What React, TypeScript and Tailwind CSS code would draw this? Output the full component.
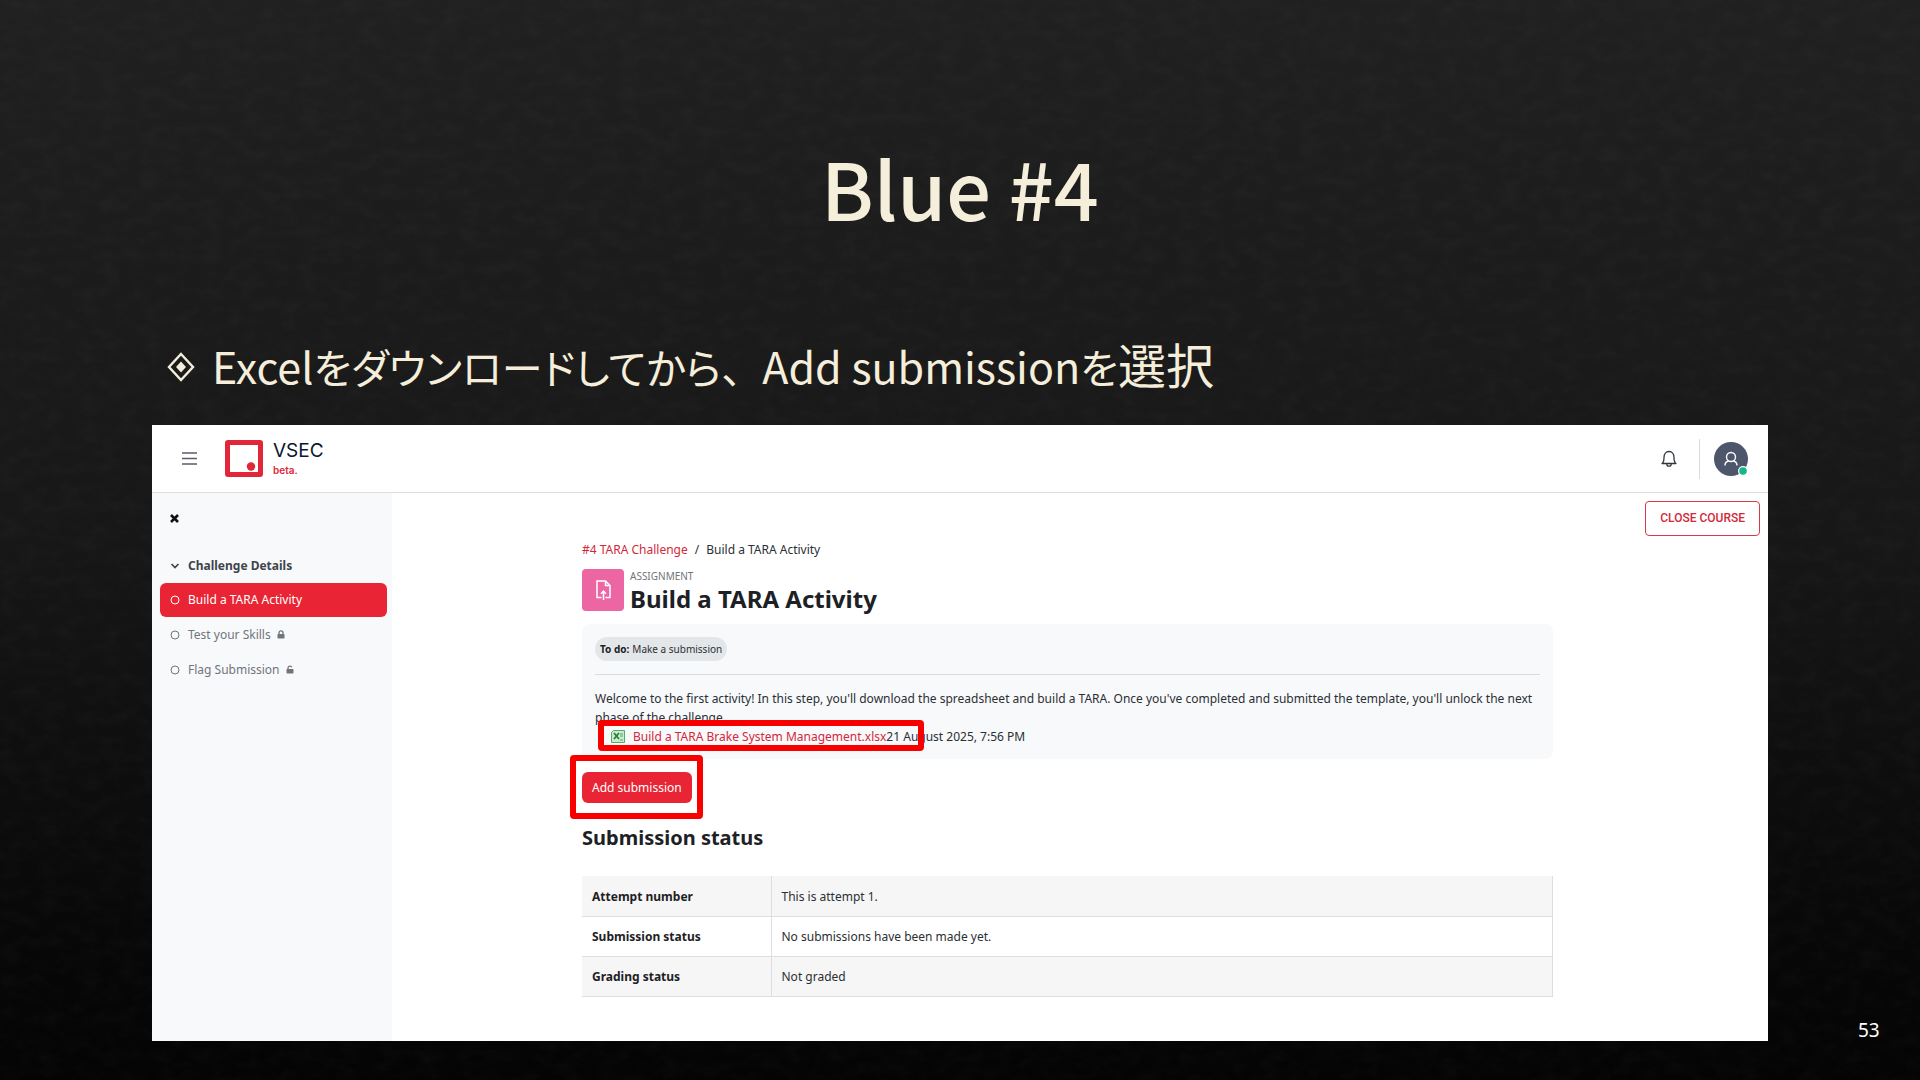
import React from "react";

const outline = "absolute rounded-sm border-6 border-[#f80000] pointer-events-none";

function Backdrop() {
  return (
    <svg className="absolute inset-0 h-full w-full" aria-hidden="true">
      <filter id="slate" x="0" y="0" width="100%" height="100%">
        <feTurbulence type="fractalNoise" baseFrequency="0.05 0.08" numOctaves="5" seed="8" />
        <feColorMatrix values="0 0 0 0 1  0 0 0 0 1  0 0 0 0 1  0.14 0 0 0 -0.05" />
      </filter>
      <rect width="100%" height="100%" filter="url(#slate)" opacity="0.3" />
    </svg>
  );
}

function Ring() {
  return (
    <svg width="10" height="10" viewBox="0 0 10 10" fill="none" stroke="currentColor" aria-hidden="true">
      <circle cx="5" cy="5" r="4" />
    </svg>
  );
}

function Lock({ open = false }: { open?: boolean }) {
  return (
    <svg width="8" height="9" viewBox="0 0 8 9" className="-ml-0.5" aria-hidden="true">
      <rect x="0.5" y="4" width="7" height="4.5" rx="0.7" fill="currentColor" />
      <path d={open ? "M2 4V2.8a2 2 0 0 1 3.8-.6" : "M2 4V2.8a2 2 0 0 1 4 0V4"} fill="none" stroke="currentColor" strokeWidth="1.3" />
    </svg>
  );
}

function TopBar() {
  return (
    <header className="flex h-17 items-center border-b border-[#dcdee0] pr-5 pl-7">
      <button aria-label="Menu" className="p-0.5">
        <svg width="15" height="13" viewBox="0 0 15 13" stroke="#5a5e66" strokeWidth="1.6" aria-hidden="true">
          <path d="M0 1h15M0 6.5h15M0 12h15" />
        </svg>
      </button>
      <a href="#home" className="ml-6.5 flex items-center gap-2.5">
        <svg width="38" height="37" viewBox="0 0 38 37" aria-hidden="true">
          <rect x="2.5" y="2.5" width="33" height="32" rx="0.5" fill="none" stroke="#e02638" strokeWidth="5" />
          <circle cx="26" cy="26.5" r="4.2" fill="#e02638" />
        </svg>
        <span className="flex flex-col pt-0.5">
          <span className="font-['Inter',sans-serif] text-[19px] leading-5 text-[#0b1630]">VSEC</span>
          <span className="font-['Inter',sans-serif] text-[10px] leading-[18px] font-semibold text-[#e02638]">beta.</span>
        </span>
      </a>
      <div className="ml-auto flex items-center">
        <button aria-label="Notifications">
          <svg width="16" height="18" viewBox="0 0 16 18" fill="none" stroke="#33373d" strokeWidth="1.3" strokeLinejoin="round" aria-hidden="true">
            <path d="M1 13.5c1.6-1 2-2.4 2-6C3 4 5 1.5 8 1.5s5 2.5 5 6c0 3.6.4 5 2 6z" />
            <path d="M5.8 14a2.2 2.2 0 0 0 4.4 0" />
          </svg>
        </button>
        <span className="ml-5.5 h-10 w-px bg-[#d9dbde]" />
        <button aria-label="Account" className="relative ml-3.5">
          <svg width="34" height="34" viewBox="0 0 34 34" fill="none" aria-hidden="true">
            <circle cx="17" cy="17" r="17" fill="#4d566b" />
            <circle cx="17" cy="15" r="4.5" stroke="#fff" strokeWidth="1.4" />
            <path d="M11 23.5c0-2.5 1.5-4 3.5-4.5M23 23.5c0-2.5-1.5-4-3.5-4.5" stroke="#fff" strokeWidth="1.4" />
            <circle cx="29" cy="29" r="5" fill="#fff" />
            <circle cx="29" cy="29" r="3.8" fill="#12b886" />
          </svg>
        </button>
      </div>
    </header>
  );
}

function Sidebar() {
  return (
    <nav className="w-60 shrink-0 bg-[#f8f9fb] pr-[5px] pl-2 text-[12px] text-[#6f757b]">
      <button aria-label="Close drawer" className="mt-[15px] block px-2.5 py-1.5 text-[#111]">
        <svg width="9" height="9" viewBox="0 0 9 9" stroke="currentColor" strokeWidth="2.6" aria-hidden="true">
          <path d="M1 1l7 7M8 1l-7 7" />
        </svg>
      </button>
      <button className="mt-5 flex h-[34px] w-full items-center gap-2 px-2.5 font-bold text-[#3f454b]">
        <svg width="10" height="6" viewBox="0 0 10 6" fill="none" stroke="currentColor" strokeWidth="1.7" aria-hidden="true">
          <path d="M1.5 1L5 4.5 8.5 1" />
        </svg>
        Challenge Details
      </button>
      <a href="#build" className="flex h-[34px] items-center gap-2 rounded-md bg-[#e92434] px-2.5 text-white">
        <Ring />
        Build a TARA Activity
      </a>
      <a href="#test" className="flex h-[35px] items-center gap-2 px-2.5">
        <Ring />
        Test your Skills
        <Lock />
      </a>
      <a href="#flag" className="flex h-[35px] items-center gap-2 px-2.5">
        <Ring />
        Flag Submission
        <Lock open />
      </a>
    </nav>
  );
}

const rows = [
  ["Attempt number", "This is attempt 1."],
  ["Submission status", "No submissions have been made yet."],
  ["Grading status", "Not graded"],
];

function Activity() {
  return (
    <main className="relative min-w-0 flex-1 pr-[215px] pb-11 pl-[190px] text-[12px] text-[#2b2f33]">
      <button className="absolute top-2 right-2 h-[35px] rounded-sm border border-[#d63a4a] px-3.5 pb-0.5 font-['Roboto',sans-serif] text-[12px] font-medium text-[#d3283a]">
        CLOSE COURSE
      </button>
      <div className="mt-[49px] flex h-4 items-center gap-[7px]">
        <a href="#tara" className="text-[#d3283a]">#4 TARA Challenge</a>
        <span>/</span>
        <span>Build a TARA Activity</span>
      </div>
      <div className="mt-[11px] flex items-start gap-1.5">
        <span className="flex size-[42px] items-center justify-center rounded-sm bg-[#ec66a3]">
          <svg width="15" height="20" viewBox="0 0 15 20" fill="none" stroke="#fff" strokeWidth="1.5" aria-hidden="true">
            <path d="M5.5 17.5H1V1h8.5L14 5.5v12H9.5M9.5 1v4.5H14M7.5 20v-8.500M5 13.800l2.500-2.600 2.500 2.600" />
          </svg>
        </span>
        <div>
          <div className="text-[10px] leading-[15px] text-[#6f757b]">ASSIGNMENT</div>
          <h2 className="text-[24px] leading-[30px] font-bold text-[#1d2125]">Build a TARA Activity</h2>
        </div>
      </div>
      <section className="mt-2.5 rounded-lg bg-[#f8f9fb] px-[13px] py-[13px]">
        <div className="flex">
          <span className="flex h-6 items-center gap-[3px] rounded-full bg-[#e4e7ea] px-[5px] text-[10px]">
            <strong className="text-[#1d2125]">To do:</strong> Make a submission
          </span>
        </div>
        <hr className="mt-[13px] border-[#d9dcdf]" />
        <p className="mt-3.5 leading-[19px]">
          Welcome to the first activity! In this step, you'll download the spreadsheet and build a TARA. Once you've completed and submitted the template, you'll unlock the next phase of the challenge.
        </p>
        <div className="relative flex h-[19px] items-center pl-4">
          <svg width="14" height="13" viewBox="0 0 14 13" aria-hidden="true">
            <path d="M2.5.5h11v12H.5v-10z" fill="#c9ecd0" stroke="#4fae63" />
            <path d="M3 3l5 6M8 3L3 9" stroke="#2c7d3d" strokeWidth="1.8" />
            <path d="M9 4h3M9 6h3M9 10h3" stroke="#4fae63" />
          </svg>
          <a href="#file" className="ml-2 text-[#d3283a]">Build a TARA Brake System Management.xlsx</a>
          <span>21 August 2025, 7:56 PM</span>
          <span className={outline + " -top-[7px] left-[3px] h-[31px] w-[326px]"} />
        </div>
      </section>
      <div className="relative mt-[13px] flex">
        <button className="h-[31px] rounded-md bg-[#e92434] px-2.5 text-white">Add submission</button>
        <span className={outline + " -top-[17px] -left-3 h-16 w-[133px]"} />
      </div>
      <h3 className="mt-[21px] text-[20px] leading-7 font-bold text-[#1d2125]">Submission status</h3>
      <table className="mt-6 w-full border-collapse text-left">
        <tbody>
          {rows.map(([label, value]) => (
            <tr key={label} className="h-10 border-r border-b border-[#dcdee0] odd:bg-[#f6f6f6]">
              <th scope="row" className="w-[189px] border-r border-[#dcdee0] px-2.5 pt-0.5 font-bold text-[#1d2125]">{label}</th>
              <td className="px-2.5 pt-0.5">{value}</td>
            </tr>
          ))}
        </tbody>
      </table>
    </main>
  );
}

export default function App() {
  return (
    <div className="relative flex min-h-screen flex-col bg-linear-to-b from-[#202020] via-[#171717] to-[#040404] font-['Noto_Sans',sans-serif]">
      <Backdrop />
      <div className="relative font-['Noto_Sans_CJK_JP',sans-serif] text-[#f5eeda]">
        <h1 className="pt-[129px] text-center text-[79px] leading-[116px] font-medium">Blue #4</h1>
        <ul className="mt-[86px] pl-[167px]">
          <li className="flex h-16 items-center gap-[17px] text-[41px] leading-none">
            <svg width="28" height="30" viewBox="0 0 28 30" className="mt-2" aria-hidden="true">
              <path d="M14 2L26 15 14 28 2 15z" fill="none" stroke="currentColor" strokeWidth="2.4" />
              <path d="M14 9.5L19 15l-5 5.5L9 15z" fill="currentColor" />
            </svg>
            <span className="whitespace-nowrap [font-feature-settings:'palt']">
              <span className="text-[43px]">Excel</span>をダウンロードしてから<span className="[font-feature-settings:normal]">、</span><span className="text-[43px]">Add submission</span>を<span className="text-[48px]">選択</span>
            </span>
          </li>
        </ul>
      </div>
      <div className="relative mt-[30px] flex">
        <div className="w-[152px] shrink-0" />
        <div className="flex min-w-0 flex-1 flex-col bg-white">
          <TopBar />
          <div className="flex flex-1">
            <Sidebar />
            <Activity />
          </div>
        </div>
        <div className="flex w-[152px] shrink-0 items-end pl-[90px] text-[19px] leading-[22px] text-white">53</div>
      </div>
    </div>
  );
}
